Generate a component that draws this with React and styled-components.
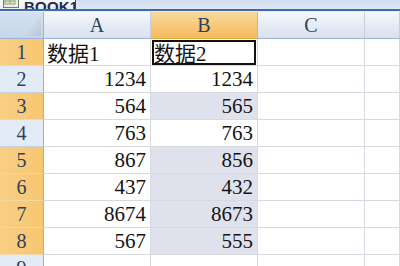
import React from "react";
import styled, { createGlobalStyle, css } from "styled-components";

const Global = createGlobalStyle`
  html, body { margin: 0; padding: 0; background: #ffffff; overflow: hidden; }
  body { width: 400px; height: 266px; }
`;

const Page = styled.div`
  width: 400px;
  height: 266px;
  overflow: hidden;
  display: flex;
  flex-direction: column;
  font-family: "Liberation Serif", "Noto Sans CJK SC", serif;
`;

const TabBar = styled.div`
  height: 9px;
  flex: none;
  display: flex;
  background: linear-gradient(#cfdcee, #dde7f5);
  border-bottom: 2px solid #3c69b2;
`;

const Tab = styled.div`
  width: 76px;
  height: 9px;
  display: flex;
  align-items: flex-end;
  gap: 5px;
  padding-left: 3px;
  box-sizing: border-box;
  background: linear-gradient(#f6f8fb, #e9eef6);
  border-right: 1px solid #2c4a7a;
  overflow: hidden;
`;

const TabText = styled.span`
  font-family: "Liberation Sans", Arial, sans-serif;
  font-weight: bold;
  font-size: 15px;
  line-height: 15px;
  color: #1e2d4a;
  margin-bottom: -5px;
  letter-spacing: 0.2px;
`;

const Gap = styled.div`
  height: 1px;
  flex: none;
  background: #e8eef7;
`;

const Grid = styled.div`
  display: grid;
  grid-template-columns: 44px 107px 107px 107px 1fr;
  grid-auto-rows: 27px;
  grid-template-rows: 27px;
`;

const Cell = styled.div`
  box-sizing: border-box;
  border-right: 1px solid #d6dae0;
  border-bottom: 1px solid #d6dae0;
  display: flex;
  align-items: center;
  justify-content: ${(p) => (p.$num ? "flex-end" : "flex-start")};
  padding: ${(p) => (p.$num ? "0 4px 0 0" : "0 0 0 3px")};
  font-size: 21px;
  color: #141414;
  background: ${(p) => (p.$sel ? "#dfe2ec" : "#ffffff")};
  white-space: nowrap;
  position: relative;
`;

const ActiveBox = styled.div`
  position: absolute;
  left: 1px;
  top: 1px;
  right: 1px;
  bottom: 0px;
  border: 2px solid #111;
  pointer-events: none;
`;

const ColHead = styled.div`
  box-sizing: border-box;
  display: flex;
  align-items: center;
  justify-content: center;
  font-size: 20px;
  color: #2e3f5c;
  border-right: 1px solid #c3cfdf;
  border-bottom: 1px solid #9db2cc;
  background: ${(p) =>
    p.$hl
      ? "linear-gradient(#f9d99b, #f6c777 55%, #f3bb5e)"
      : "linear-gradient(#f6f8fb, #e6ecf5 50%, #d8e1ee)"};
  ${(p) => p.$hl && css`border-bottom-color: #e0a642; border-right-color: #e9b25a;`}
`;

const RowHead = styled.div`
  box-sizing: border-box;
  display: flex;
  align-items: center;
  justify-content: center;
  font-size: 20px;
  color: #2e3f5c;
  border-right: 1px solid #9db2cc;
  border-bottom: 1px solid ${(p) => (p.$hl ? "#f0d6a8" : "#c5d2e2")};
  background: ${(p) =>
    p.$hl ? "linear-gradient(90deg, #f9cf85, #f7c670)" : "#e3ebf6"};
  ${(p) => p.$hl && css`border-right-color: #e2a84c;`}
`;

const Corner = styled.div`
  box-sizing: border-box;
  position: relative;
  background: linear-gradient(#d5e1f0, #c7d6ea);
  border-right: 1px solid #9db2cc;
  border-bottom: 1px solid #9db2cc;
`;

const SheetIcon = () => (
  <svg width="16" height="9" viewBox="0 0 16 9" style={{ flex: "none" }}>
    <rect x="0.5" y="-6" width="15" height="13.5" fill="#e9efe4" stroke="#6d7f62" />
    <rect x="2" y="-4" width="10" height="8" fill="#d9e6cf" stroke="#7c9a63" strokeWidth="0.8" />
    <line x1="2" y1="1" x2="12" y2="1" stroke="#7c9a63" strokeWidth="0.8" />
    <line x1="7" y1="-4" x2="7" y2="4" stroke="#7c9a63" strokeWidth="0.8" />
  </svg>
);

const CornerTri = () => (
  <svg width="20" height="20" viewBox="0 0 20 20" style={{ position: "absolute", right: 2, bottom: 2 }}>
    <defs>
      <linearGradient id="tri" x1="0" y1="0" x2="1" y2="1">
        <stop offset="0" stopColor="#e9eef6" />
        <stop offset="1" stopColor="#b6c5d9" />
      </linearGradient>
    </defs>
    <polygon points="20,0 20,20 0,20" fill="url(#tri)" />
  </svg>
);

const rows = [
  { n: 1, a: "数据1", b: "数据2", hl: true, text: true },
  { n: 2, a: "1234", b: "1234", hl: false, sel: false },
  { n: 3, a: "564", b: "565", hl: true, sel: true },
  { n: 4, a: "763", b: "763", hl: false, sel: false },
  { n: 5, a: "867", b: "856", hl: true, sel: true },
  { n: 6, a: "437", b: "432", hl: true, sel: true },
  { n: 7, a: "8674", b: "8673", hl: true, sel: true },
  { n: 8, a: "567", b: "555", hl: true, sel: true },
  { n: 9, a: "", b: "", hl: false, sel: false },
];

export default function App() {
  return (
    <Page>
      <Global />
      <TabBar>
        <Tab>
          <SheetIcon />
          <TabText>BOOK1</TabText>
        </Tab>
      </TabBar>
      <Gap />
      <Grid>
        <Corner>
          <CornerTri />
        </Corner>
        <ColHead>A</ColHead>
        <ColHead $hl>B</ColHead>
        <ColHead>C</ColHead>
        <ColHead />
        {rows.map((r) => (
          <React.Fragment key={r.n}>
            <RowHead $hl={r.hl}>{r.n}</RowHead>
            <Cell $num={!r.text}>{r.a}</Cell>
            <Cell $num={!r.text} $sel={r.sel}>
              {r.b}
              {r.n === 1 && <ActiveBox />}
            </Cell>
            <Cell />
            <Cell />
          </React.Fragment>
        ))}
      </Grid>
    </Page>
  );
}
